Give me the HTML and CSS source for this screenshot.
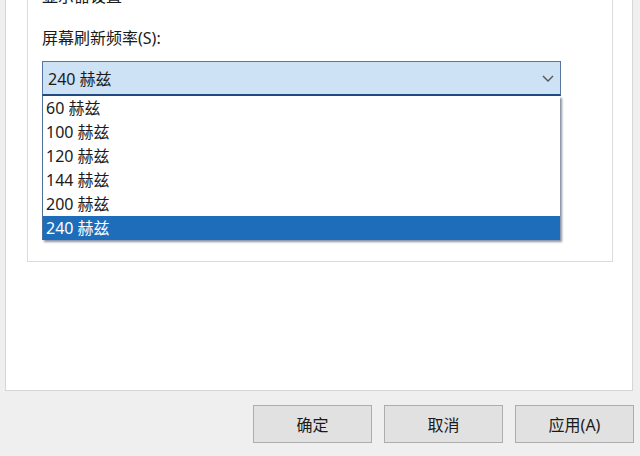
FILE: index.html
```html
<!DOCTYPE html>
<html lang="zh-CN">
<head>
<meta charset="utf-8">
<title>屏幕刷新频率</title>
<link rel="stylesheet" href="styles.css">
</head>
<body>
<div class="panel">
  <div class="group">
    <div class="group-title">显示器设置</div>
    <div class="label">屏幕刷新频率(S):</div>
    <div class="combo-wrap">
      <div class="combo">
        <span class="combo-value">240 赫兹</span>
        <svg class="chevron" width="12" height="7" viewBox="0 0 12 7"><path d="M1 1 L6 6 L11 1" fill="none" stroke="#555" stroke-width="1.4"/></svg>
      </div>
      <ul class="list">
        <li class="item">60 赫兹</li>
        <li class="item">100 赫兹</li>
        <li class="item">120 赫兹</li>
        <li class="item">144 赫兹</li>
        <li class="item">200 赫兹</li>
        <li class="item selected">240 赫兹</li>
      </ul>
    </div>
  </div>
</div>
<div class="buttons">
  <button class="btn">确定</button>
  <button class="btn">取消</button>
  <button class="btn">应用(A)</button>
</div>
</body>
</html>
```
FILE: styles.css
```css
html, body {
  margin: 0;
  padding: 0;
}
body {
  width: 640px;
  height: 456px;
  overflow: hidden;
  background: #f0efef;
  font-family: "Noto Sans", "Noto Sans CJK SC", sans-serif;
  font-size: 16px;
  color: #1a1a1a;
}
.panel {
  box-sizing: border-box;
  margin: -30px 0 0 5px;
  width: 628px;
  height: 421px;
  background: #fff;
  border: 1px solid #d6d6d6;
  padding: 25px 0 0 21px;
}
.group {
  box-sizing: border-box;
  width: 586px;
  height: 266px;
  border: 1px solid #dcdcdc;
  padding: 0 0 0 14px;
}
.group-title {
  display: block;
  width: fit-content;
  margin: -11px 0 0 -2px;
  padding: 0 2px;
  line-height: 20px;
  background: #fff;
}
.label {
  margin-top: 22px;
  line-height: 20px;
}
.combo-wrap {
  position: relative;
  margin-top: 13px;
  width: 519px;
}
.combo {
  box-sizing: border-box;
  height: 35px;
  display: flex;
  align-items: center;
  justify-content: space-between;
  padding: 0 6px 0 5px;
  background: #cde2f4;
  border: 1px solid #56759f;
  border-bottom: 2px solid #1f4a82;
}
.chevron {
  display: block;
  margin-top: 1px;
}
.list {
  position: absolute;
  left: 0;
  top: 100%;
  box-sizing: border-box;
  width: 518px;
  margin: 0;
  padding: 0;
  list-style: none;
  background: #fff;
  border-left: 1px solid #4f6f98;
  box-shadow: 2px 2px 2px rgba(40, 60, 90, 0.55);
}
.item {
  height: 24px;
  line-height: 24px;
  padding-left: 3px;
}
.item.selected {
  background: #1e6dbb;
  color: #fff;
}
.buttons {
  display: flex;
  justify-content: flex-end;
  gap: 12px;
  margin-top: 14px;
  padding-right: 6px;
}
.btn {
  box-sizing: border-box;
  width: 119px;
  height: 38px;
  background: #e1e1e1;
  border: 1px solid #adadad;
  font-family: "Noto Sans", "Noto Sans CJK SC", sans-serif;
  font-size: 16px;
  color: #1a1a1a;
  padding: 0;
}
```
